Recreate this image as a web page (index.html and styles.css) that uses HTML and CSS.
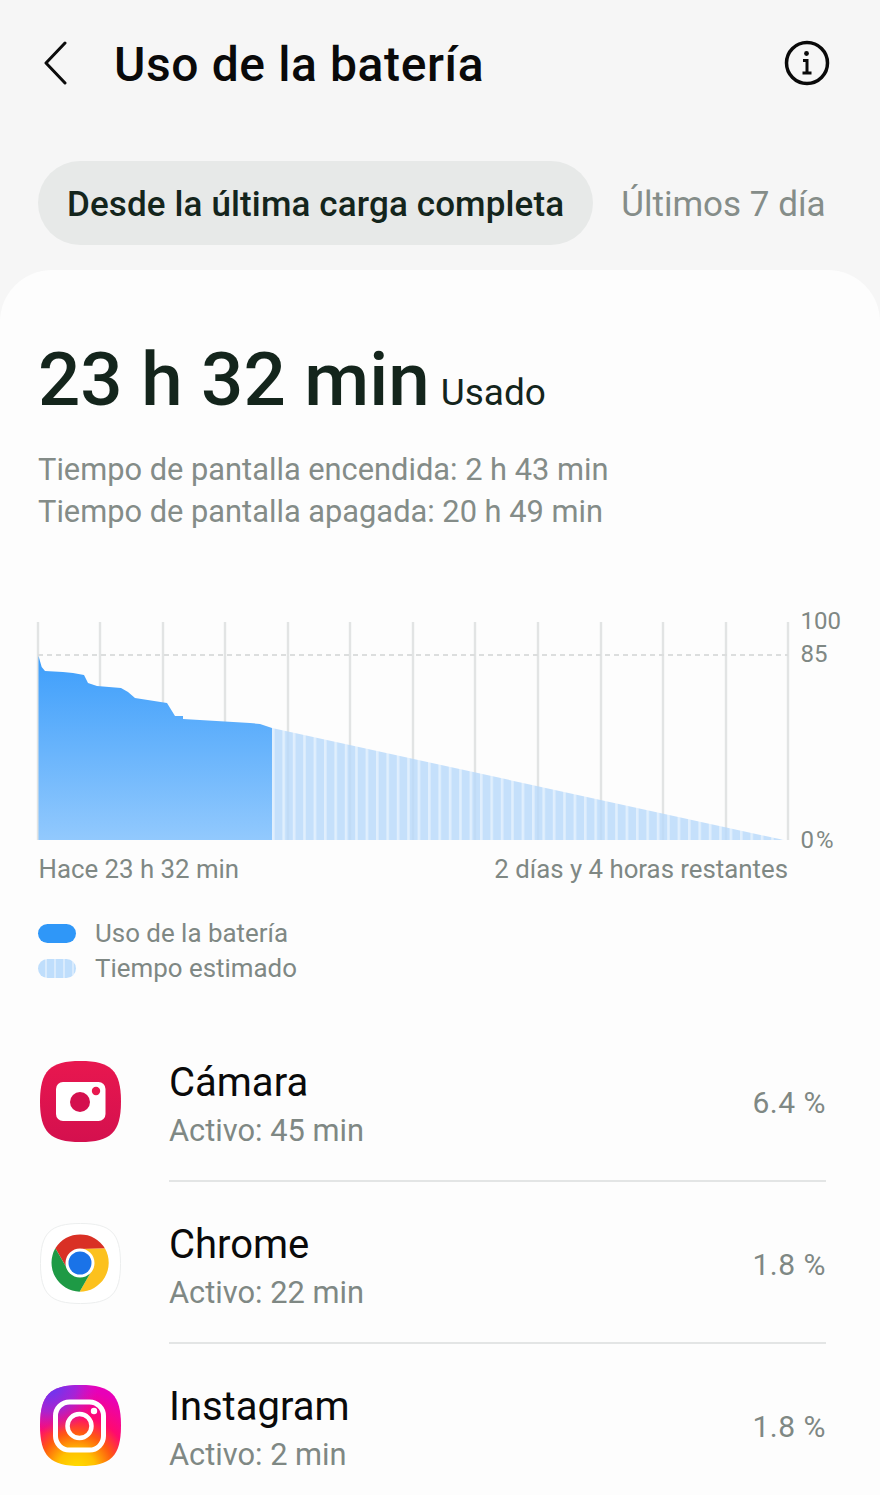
FILE: index.html
```html
<!DOCTYPE html>
<html lang="es">
<head>
<meta charset="utf-8">
<title>Uso de la batería</title>
<link rel="stylesheet" href="styles.css">
</head>
<body>
<div class="screen">
  <header class="topbar">
    <svg class="back" width="26" height="44" viewBox="0 0 26 44"><path d="M23 2 L4 22 L23 42"/></svg>
    <h1 class="title">Uso de la batería</h1>
    <svg class="info" width="46" height="46" viewBox="0 0 46 46"><circle cx="23" cy="23" r="20.5"/><path class="stem" d="M19 20.500 H23 V33 M18.500 33 H27.500"/><circle class="dot" cx="22.500" cy="13.500" r="2.400"/></svg>
  </header>
  <nav class="tabs">
    <div class="tab active">Desde la última carga completa</div>
    <div class="tab">Últimos 7 días</div>
  </nav>
  <main class="card">
    <div class="usage"><span class="big">23 h 32 min</span><span class="used">Usado</span></div>
    <div class="times">
      <p>Tiempo de pantalla encendida: 2 h 43 min</p>
      <p>Tiempo de pantalla apagada: 20 h 49 min</p>
    </div>
    <svg class="chart" width="880" height="290" viewBox="0 600 880 290">
      <defs>
        <linearGradient id="fillBlue" x1="0" y1="0" x2="0" y2="1">
          <stop offset="0" stop-color="#3d9efb"/>
          <stop offset="1" stop-color="#92c9fd"/>
        </linearGradient>
        <pattern id="stripes" x="272" y="0" width="10.4" height="10" patternUnits="userSpaceOnUse">
          <rect width="10.4" height="10" fill="#b7d9fb"/>
          <rect width="2.6" height="10" fill="#d9ebfd"/>
        </pattern>
      </defs>
      <g class="grid">
        <path d="M38 622V840M100 622V840M163 622V840M225 622V840M288 622V840M350 622V840M413 622V840M475 622V840M538 622V840M601 622V840M663 622V840M726 622V840M788 622V840"/>
      </g>
      <path class="dash" d="M38 655H788"/>
      <path fill="url(#stripes)" opacity=".8" d="M272 728 L784 840 H272 Z"/>
      <path fill="url(#fillBlue)" d="M38.500 656 L41.700 667 L45 671 L63 672 L73 673 L84 675 L88 683 L97 686 L121 688 L128 692 L135 698 L167 703 L175 716 L183 716 L183 719 L250 723 L260 724 L272 728 V840 H38.500 Z"/>
      <text class="tick" x="800.500" y="629">100</text>
      <text class="tick" x="800.500" y="662">85</text>
      <text class="tick pctlabel" x="800.500" y="848">0 %</text>
      <text class="axis" x="38.500" y="878">Hace 23 h 32 min</text>
      <text class="axis end" x="788" y="878">2 días y 4 horas restantes</text>
    </svg>
    <ul class="legend">
      <li><span class="swatch solid"></span>Uso de la batería</li>
      <li><span class="swatch striped"></span>Tiempo estimado</li>
    </ul>
    <section class="apps">
      <article class="app">
        <svg class="appicon" width="81" height="81" viewBox="0 0 81 81">
          <defs><linearGradient id="camGrad" x1="0" y1="0" x2="0" y2="1"><stop offset="0" stop-color="#e8174f"/><stop offset="1" stop-color="#d4104e"/></linearGradient></defs>
          <path fill="url(#camGrad)" d="M40.500 0C71 0 81 10 81 40.500C81 71 71 81 40.500 81C10 81 0 71 0 40.500C0 10 10 0 40.500 0Z"/>
          <rect x="16" y="21" width="49.500" height="39" rx="7" fill="#fff"/>
          <circle cx="40" cy="41" r="10" fill="#d4104e"/>
          <circle cx="56" cy="30" r="4.200" fill="#e8194f"/>
        </svg>
        <div class="body">
          <div class="text"><div class="name">Cámara</div><div class="sub">Activo: 45 min</div></div>
          <div class="pct">6.4 %</div>
        </div>
      </article>
      <article class="app">
        <svg class="appicon" width="81" height="81" viewBox="0 0 81 81">
          <path fill="#fff" stroke="#eceeee" d="M40.500 .5C71 .5 80.500 10 80.500 40.500C80.500 71 71 80.500 40.500 80.500C10 80.500 .5 71 .5 40.500C.5 10 10 .5 40.500 .5Z"/>
          <g transform="translate(40 40)">
            <path fill="#d93025" d="M0-14 L25-14.500 A29 29 0 0 0-24.650-14.700 L-12.100 7Z"/>
            <path fill="#fcc11e" d="M12.100 7 L-.4 28.700 A29 29 0 0 0 25-14.500 L0-14Z"/>
            <path fill="#1e9a45" d="M-12.100 7 L-24.650-14.700 A29 29 0 0 0-.4 28.700 L12.100 7Z"/>
            <circle r="14.500" fill="#fff"/>
            <circle r="11.500" fill="#1a73e8"/>
          </g>
        </svg>
        <div class="body">
          <div class="text"><div class="name">Chrome</div><div class="sub">Activo: 22 min</div></div>
          <div class="pct">1.8 %</div>
        </div>
      </article>
      <article class="app last">
        <svg class="appicon" width="81" height="81" viewBox="0 0 81 81">
          <defs>
            <radialGradient id="igGrad" cx=".45" cy="1.05" r="1">
              <stop offset="0" stop-color="#ffe000"/>
              <stop offset=".24" stop-color="#ffc000"/>
              <stop offset=".46" stop-color="#ff5a10"/>
              <stop offset=".66" stop-color="#ff0a6e"/>
              <stop offset="1" stop-color="#e800b8"/>
            </radialGradient>
            <radialGradient id="igPurple" cx=".12" cy="0" r=".6">
              <stop offset="0" stop-color="#5a3cf5"/>
              <stop offset=".55" stop-color="#8a30e8" stop-opacity=".7"/>
              <stop offset="1" stop-color="#c020d0" stop-opacity="0"/>
            </radialGradient>
          </defs>
          <path fill="url(#igGrad)" d="M40.500 0C71 0 81 10 81 40.500C81 71 71 81 40.500 81C10 81 0 71 0 40.500C0 10 10 0 40.500 0Z"/>
          <path fill="url(#igPurple)" d="M40.500 0C71 0 81 10 81 40.500C81 71 71 81 40.500 81C10 81 0 71 0 40.500C0 10 10 0 40.500 0Z"/>
          <rect x="15.500" y="17" width="48" height="48" rx="14" fill="none" stroke="#fff" stroke-width="5"/>
          <circle cx="39.500" cy="41" r="12" fill="none" stroke="#fff" stroke-width="4.500"/>
          <circle cx="54" cy="26" r="3.200" fill="#fff"/>
        </svg>
        <div class="body">
          <div class="text"><div class="name">Instagram</div><div class="sub">Activo: 2 min</div></div>
          <div class="pct">1.8 %</div>
        </div>
      </article>
    </section>
  </main>
</div>
</body>
</html>
```

FILE: styles.css
```css
* { box-sizing: border-box; }
html, body { margin: 0; padding: 0; }
body { background: #f6f6f6; font-family: Roboto, "Noto Sans", sans-serif; color: #000; }
.screen { width: 880px; height: 1495px; overflow: hidden; }

.topbar { height: 126px; display: flex; align-items: center; padding: 0 50px 0 42px; }
.back { fill: none; stroke: #0c0c0c; stroke-width: 3; flex: none; }
.back path { stroke-linecap: round; stroke-linejoin: round; }
.title { flex: 1; margin: 4px 0 0 46px; font-size: 48px; font-weight: 500; line-height: 54px; letter-spacing: .6px; color: #0a0a0a; }
.info { fill: none; stroke: #0a0a0a; stroke-width: 3.5; flex: none; }
.info .stem { stroke-width: 3; }
.info .dot { fill: #0a0a0a; stroke: none; }

.tabs { display: flex; align-items: center; margin: 35px 54px 0 38px; height: 84px; overflow: hidden; white-space: nowrap; }
.tab { font-size: 35px; line-height: 88px; height: 84px; color: #858d89; flex: none; padding-left: 28px; }
.tab.active { padding: 0 29px; border-radius: 42px; background: #e7e9e8; color: #14251c; font-weight: 500; letter-spacing: .13px; }

.card { margin-top: 25px; height: 1260px; background: #fdfdfd; border-radius: 52px 52px 0 0; padding-top: 67px; }
.usage { display: flex; align-items: baseline; padding-left: 38px; color: #14251c; }
.big { font-size: 74.5px; font-weight: 500; line-height: 86px; }
.used { font-size: 37px; margin-left: 11px; }
.times { margin: 26px 0 0 38px; color: #848c88; font-size: 30.8px; line-height: 42px; }
.times p { margin: 0; }

.chart { display: block; margin-top: 67px; }
.grid path { stroke: #e2e4e4; stroke-width: 2.4; fill: none; }
.dash { stroke: #dcdede; stroke-width: 2; stroke-dasharray: 5 4; fill: none; }
.axis { font-family: Roboto, "Noto Sans", sans-serif; font-size: 25.8px; fill: #7f8884; }
.axis.end { text-anchor: end; }
.tick { font-family: Roboto, "Noto Sans", sans-serif; font-size: 24px; fill: #7f8884; }
.pctlabel { word-spacing: -4px; }

.legend { list-style: none; margin: 26px 0 0 38px; padding: 0; color: #7f8884; font-size: 25.9px; line-height: 35px; }
.legend li { display: flex; align-items: center; }
.swatch { width: 38px; height: 19px; border-radius: 10px; margin-right: 19px; flex: none; }
.swatch.solid { background: #2f97f8; }
.swatch.striped { background: repeating-linear-gradient(90deg, #bfdefc 0, #bfdefc 7px, #d9ebfd 7px, #d9ebfd 9px); }

.apps { margin-top: 75px; padding-left: 40px; }
.app { display: flex; height: 162px; }
.appicon { flex: none; margin-right: 48px; }
.body { flex: 1; height: 121px; margin-right: 54px; display: flex; justify-content: space-between; align-items: flex-start; border-bottom: 2px solid #e3e5e5; }
.last .body { border-bottom: 0; }
.name { font-size: 40px; line-height: 44px; color: #0a0a0a; }
.sub { font-size: 30.8px; line-height: 40px; margin-top: 6px; color: #7f8884; }
.pct { font-size: 30px; line-height: 35px; color: #7f8884; margin-top: 24px; letter-spacing: .5px; }
```
